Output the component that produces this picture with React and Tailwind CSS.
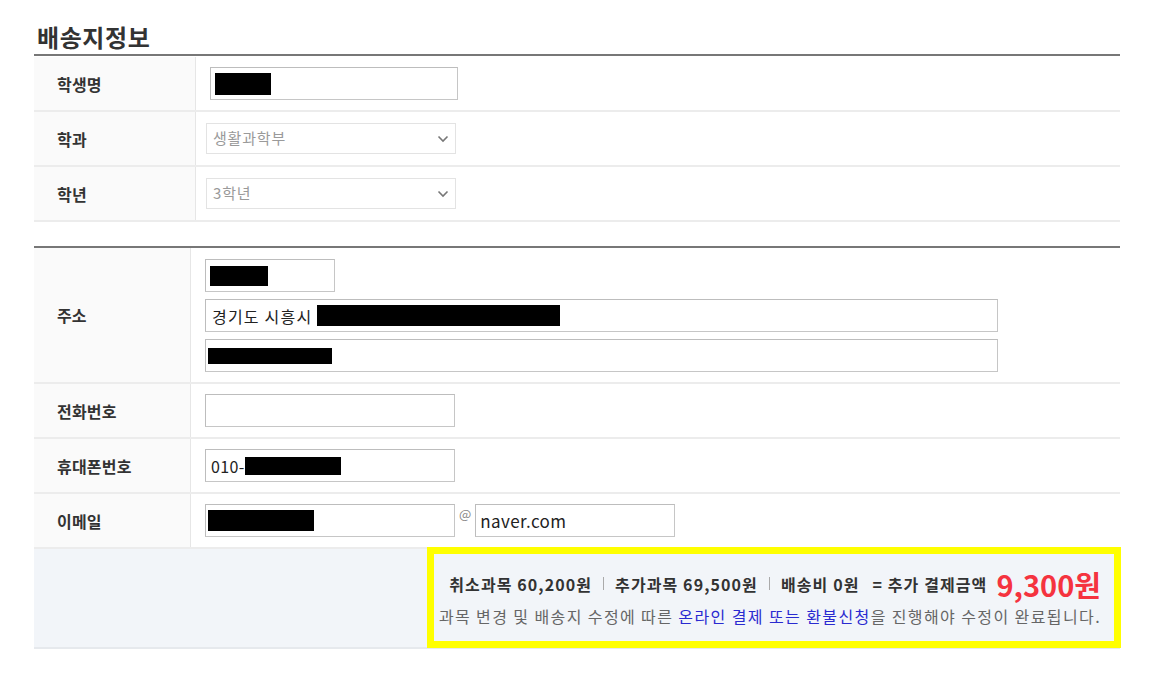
import React from "react";

const font = { fontFamily: '"Noto Sans CJK KR", "Noto Sans", sans-serif' };

function Redact({ w, h = "h-[21px]" }) {
  return <span className="inline-block bg-black align-middle" style={{ width: w, height: h }} />;
}

function Box({ className = "", children }) {
  return (
    <div
      className={`flex items-center h-[33px] border border-[#c6c6c6] border-t-[#bdbdbd] border-l-[#bdbdbd] bg-white px-[4px] text-[16px] tracking-[0.4px] text-[#222] ${className}`}
    >
      {children}
    </div>
  );
}

function Select({ value }) {
  return (
    <div className="flex items-center justify-between h-[31px] w-[250px] border border-[#e3e3e3] bg-white pl-[6px] pr-[6px] text-[15px] tracking-[0.8px] text-[#9a9a9a]">
      <span>{value}</span>
      <svg width="12" height="8" viewBox="0 0 12 8" fill="none">
        <path d="M1.5 1.5 L6 6 L10.5 1.5" stroke="#777" strokeWidth="1.6" />
      </svg>
    </div>
  );
}

function Row({ label, labelW, pl, children }) {
  return (
    <div className="flex h-[55px] border-b-2 border-[#ececec]">
      <div
        className="flex items-center bg-[#fafafa] border-r border-[#e6e6e6] pl-[23px] text-[16px] tracking-[0.2px] font-bold text-[#333]"
        style={{ width: labelW }}
      >
        {label}
      </div>
      <div className={`flex flex-1 items-center ${pl}`}>{children}</div>
    </div>
  );
}

export default function App() {
  return (
    <div className="w-[1154px] h-[679px] bg-white" style={font}>
      <div className="pl-[34px] pr-[34px] pt-[22px]">
        <h2 className="pl-[3px] text-[24px] tracking-[0.6px] font-bold leading-[30px] text-[#333] mb-[2px]">
          배송지정보
        </h2>

        {/* 기본 정보 */}
        <div className="border-t-2 border-[#777] pt-[1px]">
          <Row label="학생명" labelW={162} pl="pl-[14px]">
            <Box className="w-[248px] h-[32px] px-[3px]">
              <Redact w={56} h="22px" />
            </Box>
          </Row>
          <Row label="학과" labelW={162} pl="pl-[10px]">
            <Select value="생활과학부" />
          </Row>
          <Row label="학년" labelW={162} pl="pl-[10px]">
            <Select value="3학년" />
          </Row>
        </div>

        {/* 배송지 */}
        <div className="mt-[24px] border-t-2 border-[#777]">
          <div className="flex h-[136px] border-b-2 border-[#ececec]">
            <div className="flex w-[157px] items-center bg-[#fafafa] border-r border-[#e6e6e6] pl-[23px] text-[16px] font-bold text-[#333]">
              주소
            </div>
            <div className="flex flex-1 flex-col gap-[7px] pl-[14px] pt-[11px]">
              <Box className="w-[130px]">
                <Redact w={58} h="20px" />
              </Box>
              <Box className="w-[793px] pl-[6px]">
                <span className="tracking-[1.2px]">경기도 시흥시</span>
                <span className="ml-[5px] flex">
                  <Redact w={243} h="21px" />
                </span>
              </Box>
              <Box className="w-[793px] pl-[2px]">
                <Redact w={124} h="16px" />
              </Box>
            </div>
          </div>
          <Row label="전화번호" labelW={157} pl="pl-[14px]">
            <Box className="w-[250px]" />
          </Row>
          <Row label="휴대폰번호" labelW={157} pl="pl-[14px]">
            <Box className="w-[250px] pl-[5px]">
              <span>010-</span>
              <Redact w={96} h="18px" />
            </Box>
          </Row>
          <Row label="이메일" labelW={157} pl="pl-[14px]">
            <Box className="w-[250px] pl-[2px]">
              <Redact w={106} h="21px" />
            </Box>
            <span className="mx-[4px] self-start mt-[13px] text-[13px] leading-none text-[#888]">@</span>
            <Box className="w-[200px] pl-[4px] text-[17px]">naver.com</Box>
          </Row>

          {/* 결제 요약 */}
          <div className="flex h-[100px] bg-[#f2f5f9] border-b-2 border-[#e6e9ed]">
            <div className="ml-auto -mr-[1px] -mt-[2px] h-[101px] w-[694px] border-[7px] border-[#ffff00] bg-[#f2f5f9] pr-[13px] flex flex-col items-end justify-center">
              <div className="flex items-center text-[16px] tracking-[1.1px] font-bold text-[#333] leading-[30px]">
                <span>취소과목 60,200원</span>
                <span className="mx-[11px] inline-block h-[13px] w-px bg-[#aaa]" />
                <span>추가과목 69,500원</span>
                <span className="mx-[11px] inline-block h-[13px] w-px bg-[#aaa]" />
                <span>배송비 0원</span>
                <span className="ml-[13px]">= 추가 결제금액</span>
                <span className="ml-[9px] text-[29px] tracking-[0px] text-[#f5333f] leading-[30px]">9,300원</span>
              </div>
              <div className="mt-[6px] text-[16px] tracking-[1.4px] text-[#666] leading-[22px]">
                과목 변경 및 배송지 수정에 따른{" "}
                <span className="text-[#2a2ad0]">온라인 결제 또는 환불신청</span>을 진행해야 수정이 완료됩니다.
              </div>
            </div>
          </div>
        </div>
      </div>
    </div>
  );
}
